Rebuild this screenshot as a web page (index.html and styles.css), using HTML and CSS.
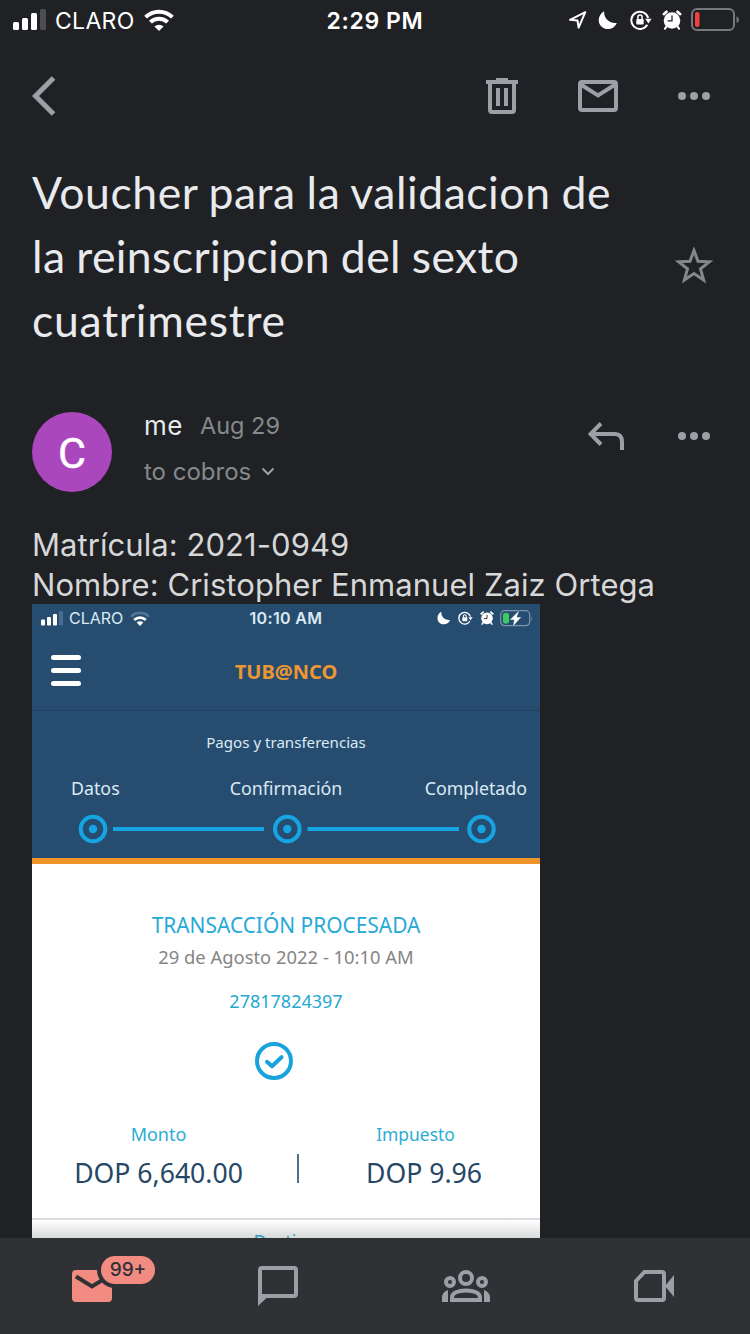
FILE: index.html
```html
<!DOCTYPE html>
<html lang="es">
<head>
<meta charset="utf-8">
<title>Mail</title>
<link rel="stylesheet" href="styles.css">
</head>
<body>
<svg class="defs" width="0" height="0">
  <symbol id="moon" viewBox="0 0 20 20"><path d="M6.200 1.200C5.400 7.400 10.800 13.900 18.800 12.900C16.800 17.200 13.600 19 10 19C5 19 .7 15.200 .7 10.200C.7 6.200 3 3 6.200 1.200Z" fill="#fff"/></symbol>
  <symbol id="lock" viewBox="0 0 22 20"><path d="M17.300 14.800A8.600 8.600 0 1 1 18.200 8" fill="none" stroke="#fff" stroke-width="2"/><path d="M15.200 8.800h6.400l-3.200 4.600z" fill="#fff"/><rect x="6.300" y="9" width="7.400" height="5.600" rx="1" fill="#fff"/><path d="M7.900 9.500V7.200a2.100 2.100 0 0 1 4.200 0V9.500" fill="none" stroke="#fff" stroke-width="1.500"/></symbol>
  <symbol id="alarm" viewBox="0 0 20 20"><circle cx="10" cy="10.500" r="8.300" fill="#fff"/><path d="M1.800 4.200L4.500 1.700M18.200 4.200L15.500 1.700" stroke="#fff" stroke-width="2.600" stroke-linecap="round"/><path d="M4.500 16.500l-1.500 2.200M15.500 16.500l1.500 2.200" stroke="#fff" stroke-width="2.200" stroke-linecap="round"/><path class="hands" d="M10 5.500V10.900H5.600" fill="none" stroke-width="1.300"/></symbol>
</svg>
<main class="screen">
  <header class="status">
    <div class="status-left">
      <svg width="34" height="22" viewBox="0 0 34 22"><g fill="#fff"><rect y="13" width="6" height="8" rx="1.500"/><rect x="9" y="9" width="6" height="12" rx="1.500"/><rect x="18" y="4" width="6" height="17" rx="1.500"/></g><rect x="27" width="6" height="21" rx="1.500" fill="#4d4e51"/></svg>
      <span class="carrier">CLARO</span>
      <svg class="wifi" width="30" height="22" viewBox="0 0 30 22"><g fill="none" stroke="#fff" stroke-width="4"><path d="M1.600 8.200a19 19 0 0 1 26.800 0"/><path d="M6.400 13.200a12.200 12.200 0 0 1 17.200 0"/></g><path d="M10.400 17.600a6.500 6.500 0 0 1 9.200 0L15 22z" fill="#fff"/></svg>
    </div>
    <span class="clock">2:29 PM</span>
    <div class="status-right">
      <svg width="20" height="20" viewBox="0 0 20 20"><path d="M2 9.800L17.300 2.200L10.600 17.600L9.500 10.500Z" fill="none" stroke="#fff" stroke-width="2" stroke-linejoin="round"/></svg>
      <svg class="i-moon" width="20" height="20"><use href="#moon"/></svg>
      <svg class="i-lock" width="22" height="20"><use href="#lock"/></svg>
      <svg class="i-alarm" width="20" height="20"><use href="#alarm"/></svg>
      <svg class="i-battery" width="49" height="24" viewBox="0 0 49 24"><rect x="1" y="1" width="42" height="21" rx="5" fill="none" stroke="#77787b" stroke-width="2"/><rect x="4" y="4" width="4.500" height="15" rx="2" fill="#f5413c"/><path d="M45.500 8.300q2.500 1 2.500 3.400t-2.500 3.400z" fill="#77787b"/></svg>
    </div>
  </header>

  <div class="toolbar">
    <svg width="24" height="40" viewBox="0 0 24 40"><path d="M21.500 2L3.500 20L21.500 38" fill="none" stroke="#9aa0a6" stroke-width="5"/></svg>
    <div class="tools">
      <svg width="32" height="36" viewBox="0 0 32 36"><g fill="#9aa0a6"><path d="M10 0h12v2h10v4H0V2h10z"/><path d="M10 10h4v18h-4zM18 10h4v18h-4z"/></g><path d="M4 5V32q0 2 2 2H26q2 0 2-2V5" fill="none" stroke="#9aa0a6" stroke-width="4"/></svg>
      <svg width="40" height="32" viewBox="0 0 40 32"><rect x="2" y="2" width="36" height="28" rx="2" fill="none" stroke="#9aa0a6" stroke-width="4"/><path d="M2 4L20 15.500L38 4" fill="none" stroke="#9aa0a6" stroke-width="4"/></svg>
      <svg width="32" height="8" viewBox="0 0 32 8" fill="#9aa0a6"><circle cx="4" cy="4" r="4"/><circle cx="16" cy="4" r="4"/><circle cx="28" cy="4" r="4"/></svg>
    </div>
  </div>

  <section class="subject">
    <h1 class="title"><span class="t1">Voucher para la validacion de</span><br><span class="t2">la reinscripcion del sexto</span><br><span class="t3">cuatrimestre</span></h1>
    <svg class="star" width="40" height="38" viewBox="0 0 40 38"><path d="M20 3.500L24 14.300L35.300 14.800L26.500 21.800L29.600 33L20 26.600L10.400 33L13.500 21.800L4.700 14.800L16 14.300Z" fill="none" stroke="#85888b" stroke-width="3"/></svg>
  </section>

  <section class="sender">
    <div class="avatar"><span>C</span></div>
    <div class="who">
      <div class="from"><span class="me">me</span><span class="date">Aug 29</span></div>
      <div class="to"><span>to cobros</span><svg width="14" height="9" viewBox="0 0 14 9"><path d="M1.500 1.500L7 7L12.500 1.500" fill="none" stroke="#9aa0a6" stroke-width="2"/></svg></div>
    </div>
    <svg class="reply" width="36" height="28" viewBox="0 0 36 28"><path d="M13 1.500L2.500 12L13 22.500M3 12H27q7 0 7 8V28" fill="none" stroke="#9aa0a6" stroke-width="4"/></svg>
    <svg class="more" width="32" height="8" viewBox="0 0 32 8" fill="#9aa0a6"><circle cx="4" cy="4" r="4"/><circle cx="16" cy="4" r="4"/><circle cx="28" cy="4" r="4"/></svg>
  </section>

  <section class="message">
    <p class="line l1">Matrícula: 2021-0949</p>
    <p class="line l2">Nombre: Cristopher Enmanuel Zaiz Ortega</p>

    <div class="voucher">
      <div class="v-top">
        <div class="v-status">
          <div class="v-left">
            <svg width="23" height="15" viewBox="0 0 23 15"><g fill="#fff"><rect y="8.500" width="4" height="6" rx="1"/><rect x="6" y="6" width="4" height="8.500" rx="1"/><rect x="12" y="3" width="4" height="11.500" rx="1"/></g><rect x="18" width="4" height="14.500" rx="1" fill="#496d91"/></svg>
            <span class="v-carrier">CLARO</span>
            <svg class="v-wifi" width="20" height="15" viewBox="0 0 20 15"><path d="M1 5.600a12.700 12.700 0 0 1 18 0" fill="none" stroke="#527593" stroke-width="2.700"/><path d="M4.200 9a8.200 8.200 0 0 1 11.600 0" fill="none" stroke="#fff" stroke-width="2.700"/><path d="M6.700 11.600a4.700 4.700 0 0 1 6.600 0L10 15z" fill="#fff"/></svg>
          </div>
          <span class="v-clock">10:10 AM</span>
          <div class="v-right">
            <svg width="14" height="14"><use href="#moon"/></svg>
            <svg width="15" height="14"><use href="#lock"/></svg>
            <svg width="14" height="14"><use href="#alarm"/></svg>
            <svg class="v-battery" width="34" height="17" viewBox="0 0 34 17"><rect x=".7" y=".7" width="29" height="15" rx="4" fill="none" stroke="#7c95ad" stroke-width="1.200"/><rect x="3" y="3" width="6" height="10.500" rx="2" fill="#3fcb63"/><path d="M19.500 0L9.500 10H14L12.500 17L21.500 7H17Z" fill="#fff" stroke="#264d70" stroke-width=".5"/><path d="M31.500 6q1.500 2.500 0 5z" fill="#7c95ad"/></svg>
          </div>
        </div>
        <div class="v-header">
          <div class="burger"><i></i><i></i><i></i></div>
          <strong class="brand">TUB@NCO</strong>
        </div>
        <div class="v-section"><span>Pagos y transferencias</span></div>
        <div class="v-labels"><span class="first">Datos</span><span class="mid">Confirmación</span><span class="last">Completado</span></div>
        <svg class="stepper" width="508" height="30" viewBox="0 0 508 30"><g fill="none" stroke="#16a4e3" stroke-width="4"><circle cx="61" cy="15" r="12.300"/><circle cx="255.300" cy="15" r="12.300"/><circle cx="449.500" cy="15" r="12.300"/><path d="M81 15H232M275.500 15H427"/></g><g fill="#16a4e3"><circle cx="61" cy="15" r="4.200"/><circle cx="255.300" cy="15" r="4.200"/><circle cx="449.500" cy="15" r="4.200"/></g></svg>
      </div>
      <div class="v-body">
        <div class="done"><span>TRANSACCIÓN PROCESADA</span></div>
        <div class="when"><span>29 de Agosto 2022 - 10:10 AM</span></div>
        <div class="number"><span>27817824397</span></div>
        <svg class="check" width="38" height="38" viewBox="0 0 38 38"><circle cx="19" cy="19" r="17" fill="none" stroke="#18a3dc" stroke-width="4"/><path d="M12 19.800L17 24.300L26.500 15.200" fill="none" stroke="#18a3dc" stroke-width="4" stroke-linecap="round" stroke-linejoin="round"/></svg>
        <div class="amounts">
          <div class="amount"><span class="k k1">Monto</span><span class="n n1">DOP 6,640.00</span></div>
          <i class="bar"></i>
          <div class="amount second"><span class="k k2">Impuesto</span><span class="n n2">DOP 9.96</span></div>
        </div>
        <div class="dest"><span>Destino</span></div>
      </div>
    </div>
  </section>

  <nav class="nav">
    <div class="tab mail">
      <svg width="40" height="32" viewBox="0 0 40 32"><rect width="40" height="32" rx="4" fill="#f28b82"/><path d="M4 6.500L20 16.500L36 6.500" fill="none" stroke="#303134" stroke-width="4"/></svg>
      <span class="badge"><b>99+</b></span>
    </div>
    <svg class="chat" width="40" height="40" viewBox="0 0 40 40"><rect x="2" y="2" width="36" height="28" rx="2" fill="none" stroke="#9aa0a6" stroke-width="4"/><path d="M0 28V40L9 31.500V28Z" fill="#9aa0a6"/></svg>
    <svg class="people" width="48" height="32" viewBox="0 0 48 32"><g fill="none" stroke="#9aa0a6" stroke-width="4"><circle cx="24" cy="8" r="6"/><circle cx="8" cy="12" r="4"/><circle cx="40" cy="12" r="4"/><path d="M10 30V27.500C10 23 16 20.500 24 20.500S38 23 38 27.500V30Z"/></g><path d="M6 20V32H0V27.500Q0 22 6 20ZM42 20V32H48V27.500Q48 22 42 20Z" fill="#9aa0a6"/></svg>
    <svg class="meet" width="40" height="32" viewBox="0 0 40 32"><path d="M10.500 2H28q2 0 2 2V28q0 2-2 2H4q-2 0-2-2V11Z" fill="none" stroke="#9aa0a6" stroke-width="4"/><path d="M31 16L40 5V27Z" fill="#9aa0a6"/></svg>
  </nav>
</main>
</body>
</html>
```
FILE: styles.css
```css
* { box-sizing: border-box; }
body { margin: 0; background: #202124; font-family: Inter, "Liberation Sans", sans-serif; }
svg { display: block; flex: none; }
.defs { position: absolute; }
.hands { stroke: #202124; }
.screen { width: 750px; height: 1334px; overflow: hidden; display: flex; flex-direction: column; color: #e8eaed; white-space: nowrap; }

.status { height: 40px; flex: none; display: grid; grid-template-columns: 1fr auto 1fr; align-items: center; padding: 0 10px; color: #fff; }
.status-left { display: flex; align-items: center; padding-left: 3px; }
.carrier { font-size: 23px; line-height: 28px; margin-left: 8px; padding-top: 1px; letter-spacing: .3px; }
.wifi { margin-left: 9px; }
.clock { font-size: 23px; font-weight: 600; line-height: 28px; letter-spacing: .6px; padding-top: 1px; }
.status-right { display: flex; align-items: center; justify-content: flex-end; }
.i-moon { margin-left: 10px; }
.i-lock { margin-left: 12px; }
.i-alarm { margin-left: 10px; }
.i-battery { margin-left: 9px; }

.toolbar { height: 112px; flex: none; display: flex; align-items: center; justify-content: space-between; padding: 0 40px 0 32px; }
.tools { display: flex; align-items: center; gap: 60px; }

.subject { height: 200px; flex: none; display: flex; justify-content: space-between; padding: 8px 36px 0 32px; }
.title { margin: 0; font: 400 44.500px/64px Lato, sans-serif; color: #e8eaed; letter-spacing: .550px; word-spacing: -1px; }
.t2 { letter-spacing: .4px; }
.t3 { letter-spacing: .750px; }
.star { margin-top: 87px; }

.sender { height: 120px; margin-top: 60px; flex: none; display: flex; padding: 0 40px 0 32px; }
.avatar { width: 80px; height: 80px; padding-top: 1px; border-radius: 50%; background: #ab47bc; color: #fff; display: flex; align-items: center; justify-content: center; font: 400 43px/48px Roboto, sans-serif; -webkit-text-stroke: .5px #fff; }
.who { flex: 1; margin-left: 32px; margin-top: -1px; }
.from { display: flex; align-items: center; height: 28px; font-size: 23.500px; }
.me { font-size: 26px; color: #e8eaed; letter-spacing: .5px; }
.date { color: #85898d; margin-left: 17px; }
.to { display: flex; align-items: center; height: 28px; margin-top: 18px; font-size: 24px; color: #85898d; }
.to svg { margin-left: 10px; }
.reply { margin-top: 10px; }
.more { margin: 20px 0 0 54px; }

.message { flex: 1; min-height: 0; overflow: hidden; padding: 0 0 0 32px; margin-top: -8px; }
.line { margin: 0; height: 40px; font-size: 31px; line-height: 41px; color: #d6d7d9; letter-spacing: .060px; }

.voucher { width: 508px; font-family: "Noto Sans", sans-serif; background: #fff; }
.v-top { height: 260px; background: #264d70; border-bottom: 6px solid #f0932b; color: #dce9f3; }
.v-top .hands { stroke: #264d70; }
.v-status { height: 28px; padding: 0 7px; display: grid; grid-template-columns: 1fr auto 1fr; align-items: center; font-family: Inter, sans-serif; }
.v-left { display: flex; align-items: center; padding-left: 2px; }
.v-carrier { font-size: 16px; margin-left: 5px; }
.v-wifi { margin-left: 7px; }
.v-clock { font-size: 16px; font-weight: 600; letter-spacing: .350px; }
.v-right { display: flex; align-items: center; justify-content: flex-end; gap: 7px; }
.v-battery { margin-left: -1px; margin-right: -1px; }
.v-header { height: 79px; border-bottom: 1px solid #1f4263; display: grid; grid-template-columns: 1fr auto 1fr; align-items: center; padding: 0 19px; }
.burger { display: grid; gap: 8px; width: 30px; margin-bottom: 2px; }
.burger i { height: 5px; border-radius: 3px; background: #fff; }
.brand { color: #ec9733; font-size: 20px; line-height: 24px; padding-top: 2px; }
.v-section { text-align: center; font-size: 15.100px; line-height: 24px; padding-top: 19px; }
.v-labels { display: grid; grid-template-columns: 1fr auto 1fr; padding: 22px 13px 0; font-size: 17.800px; line-height: 24px; }
.v-labels .first { padding-left: 26px; }
.v-labels .last { text-align: right; }
.stepper { margin-top: 14px; }

.v-body { text-align: center; }
.done { padding-top: 48px; font-size: 20.900px; line-height: 26px; color: #26a9d8; }
.when { padding-top: 7px; font-size: 18.400px; line-height: 24px; color: #858585; }
.number { padding-top: 20px; font-size: 18px; line-height: 24px; color: #26a9d0; }
.check { margin: 29px 0 0 223px; }
.amounts { height: 140px; display: flex; justify-content: center; padding-top: 42px; border-bottom: 2px solid #dadcdf; }
.amount { width: 253px; display: flex; flex-direction: column; align-items: center; }
.k { font-size: 18px; line-height: 24px; color: #2bacd2; }
.n { font-size: 26.600px; line-height: 34px; margin-top: 10px; color: #264765; }
.bar { width: 2px; height: 29px; margin-top: 32px; margin-left: 12px; background: #4c7088; }
.second { width: 241px; }
.k2 { font-size: 17.400px; margin-right: 8px; }
.n2 { margin-left: 9px; }
.dest { height: 40px; padding-top: 9px; font-size: 18px; line-height: 24px; color: #2b9fb4; background: linear-gradient(#fff, #d8dada 18px); }

.nav { height: 96px; flex: none; background: #303134; display: flex; align-items: flex-start; padding: 0 76px 0 72px; }
.mail { position: relative; width: 40px; margin-top: 32px; }
.badge { position: absolute; left: 29px; top: -14px; width: 54px; height: 28px; border-radius: 14px; background: #f28b82; box-shadow: 0 0 0 4px #303134; color: #303134; display: flex; align-items: center; justify-content: center; }
.badge b { font-size: 19px; line-height: 24px; font-weight: 500; }
.chat { margin: 28px 0 0 146px; }
.people { margin: 32px 0 0 144px; }
.meet { margin: 32px 0 0 144px; }
```
